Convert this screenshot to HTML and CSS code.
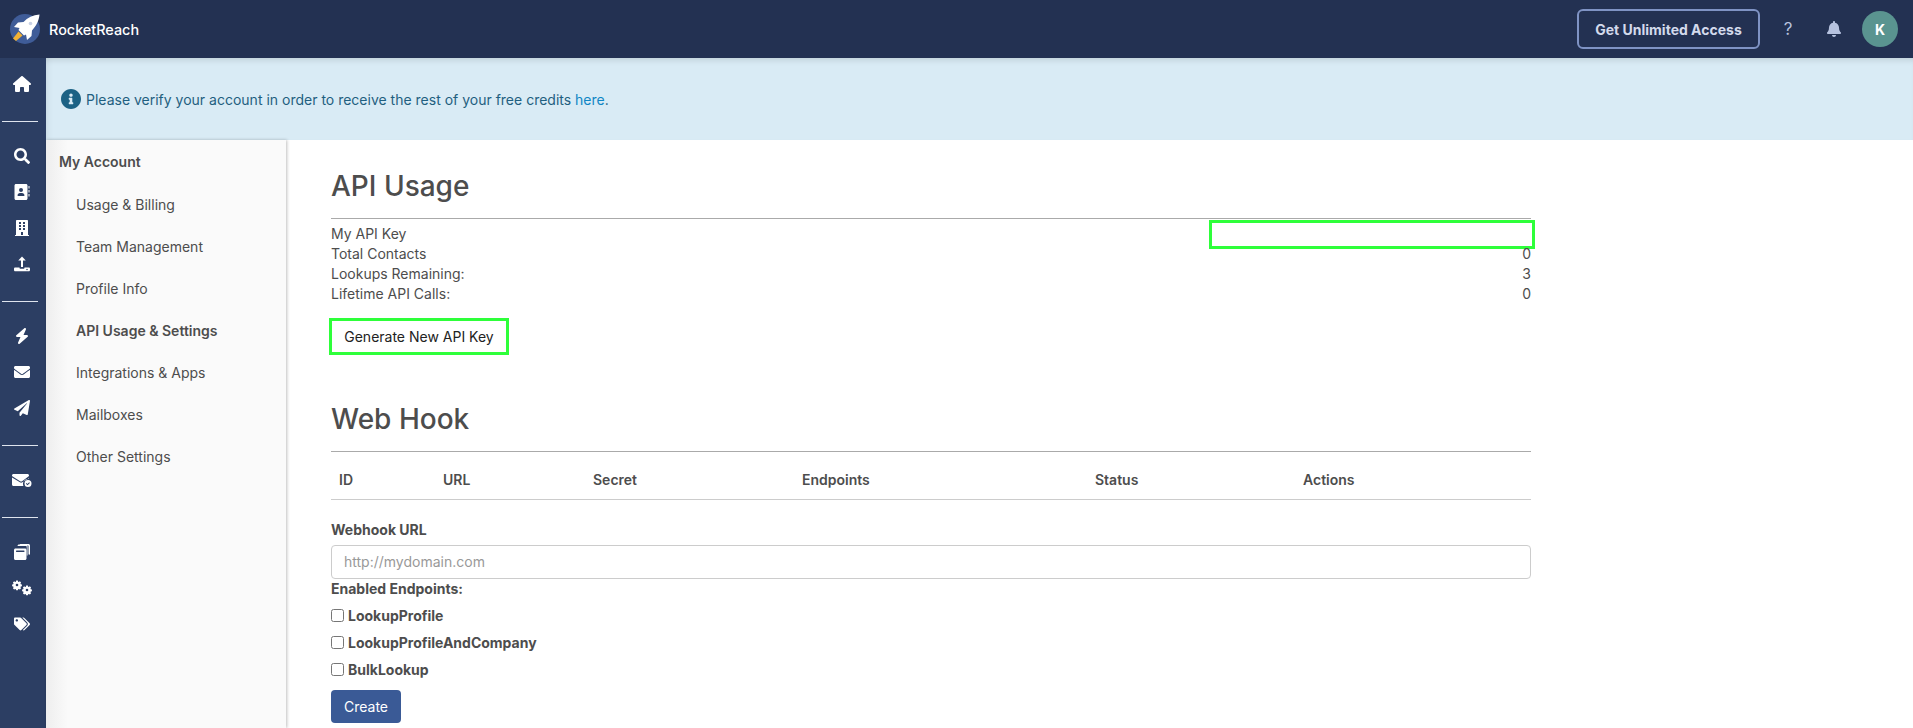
FILE: index.html
```html
<!DOCTYPE html>
<html lang="en">
<head>
<meta charset="UTF-8">
<title>RocketReach - API Usage &amp; Settings</title>
<link rel="stylesheet" href="styles.css">
</head>
<body>
<header class="topbar">
    <div class="brand">
        <svg class="brand-logo" viewBox="0 0 30 30">
            <circle cx="15" cy="15" r="15" fill="#3f5c98"/>
            <path d="M29.500.5C23 1 17.500 3.500 13.500 8L8 8.500 4 13l5.500 1-1 2 5.500 5.500 2-1 1 5.500 4.500-4 .5-5.500C26 12 29 7 29.500.5z" fill="#fff"/>
            <circle cx="20.500" cy="9.500" r="1.800" fill="#c9d2e6"/>
            <path d="M3 24.500l5.500-7 4 4-6.500 5.500z" fill="#f2b134"/>
        </svg>
        <span class="brand-name">RocketReach</span>
    </div>
    <div class="top-actions">
        <button class="upgrade-btn">Get Unlimited Access</button>
        <span class="help-link">?</span>
        <svg class="bell" viewBox="0 0 448 512"><path d="M224 512c35.320 0 63.970-28.650 63.970-64H160.030c0 35.350 28.650 64 63.970 64zm215.390-149.710c-19.320-20.760-55.470-51.990-55.470-154.290 0-77.700-54.480-139.900-127.940-155.160V32c0-17.670-14.320-32-31.980-32s-31.980 14.330-31.980 32v20.840C118.560 68.100 64.080 130.300 64.080 208c0 102.300-36.150 133.530-55.470 154.290-6 6.450-8.660 14.160-8.610 21.710.11 16.400 12.980 32 32.100 32h383.800c19.120 0 32-15.600 32.100-32 .05-7.550-2.610-15.270-8.610-21.710z"/></svg>
        <span class="avatar">K</span>
    </div>
</header>

<div class="page">
    <nav class="rail">
        <div class="rail-group first">
            <span class="rail-item"><svg class="home" viewBox="0 0 576 512"><path d="M575.800 255.500c0 18-15 32.100-32 32.100h-32l.7 160.200c0 2.700-.2 5.400-.5 8.100V472c0 22.100-17.900 40-40 40H456c-1.100 0-2.200 0-3.300-.1c-1.400 .1-2.800 .1-4.200 .1H416 392c-22.100 0-40-17.900-40-40V448 384c0-17.700-14.300-32-32-32H256c-17.700 0-32 14.300-32 32v64 24c0 22.100-17.900 40-40 40H160 128.100c-1.500 0-3-.1-4.500-.2c-1.200 .1-2.400 .2-3.600 .2H104c-22.100 0-40-17.900-40-40V360c0-.9 0-1.900 .1-2.800V287.600H32c-18 0-32-14-32-32.100c0-9 3-17 10-24L266.400 8c7-7 15-8 22-8s15 2 21 7L564.800 231.500c8 7 12 15 11 24z"/></svg></span>
        </div>
        <div class="rail-group">
            <span class="rail-item"><svg viewBox="0 0 512 512"><path d="M505 442.700L405.300 343c-4.500-4.500-10.600-7-17-7H372c27.600-35.300 44-79.700 44-128C416 93.100 322.900 0 208 0S0 93.100 0 208s93.100 208 208 208c48.300 0 92.700-16.400 128-44v16.300c0 6.400 2.500 12.500 7 17l99.700 99.700c9.400 9.400 24.600 9.400 33.900 0l28.300-28.300c9.400-9.400 9.400-24.600.1-34zM208 336c-70.700 0-128-57.200-128-128 0-70.700 57.200-128 128-128 70.700 0 128 57.200 128 128 0 70.700-57.200 128-128 128z"/></svg></span>
            <span class="rail-item"><svg viewBox="0 0 512 512"><path fill-rule="evenodd" d="M64 0h320c26.500 0 48 21.500 48 48v416c0 26.500-21.500 48-48 48H64c-26.500 0-48-21.500-48-48V48C16 21.500 37.500 0 64 0zm160 256a64 64 0 1 0 0-128 64 64 0 0 0 0 128zm-96 128h192c9 0 16-7 16-16 0-44-36-80-80-80h-64c-44 0-80 36-80 80 0 9 7 16 16 16z"/><path d="M464 64h32v80h-32zM464 192h32v80h-32zM464 320h32v80h-32z"/></svg></span>
            <span class="rail-item"><svg viewBox="0 0 448 512"><path d="M436 480h-20V24c0-13.255-10.745-24-24-24H56C42.745 0 32 10.745 32 24v456H12c-6.627 0-12 5.373-12 12v20h448v-20c0-6.627-5.373-12-12-12zM128 76c0-6.627 5.373-12 12-12h40c6.627 0 12 5.373 12 12v40c0 6.627-5.373 12-12 12h-40c-6.627 0-12-5.373-12-12V76zm0 96c0-6.627 5.373-12 12-12h40c6.627 0 12 5.373 12 12v40c0 6.627-5.373 12-12 12h-40c-6.627 0-12-5.373-12-12v-40zm52 148h-40c-6.627 0-12-5.373-12-12v-40c0-6.627 5.373-12 12-12h40c6.627 0 12 5.373 12 12v40c0 6.627-5.373 12-12 12zm76 160h-64v-84c0-6.627 5.373-12 12-12h40c6.627 0 12 5.373 12 12v84zm64-172c0 6.627-5.373 12-12 12h-40c-6.627 0-12-5.373-12-12v-40c0-6.627 5.373-12 12-12h40c6.627 0 12 5.373 12 12v40zm0-96c0 6.627-5.373 12-12 12h-40c-6.627 0-12-5.373-12-12v-40c0-6.627 5.373-12 12-12h40c6.627 0 12 5.373 12 12v40zm0-96c0 6.627-5.373 12-12 12h-40c-6.627 0-12-5.373-12-12V76c0-6.627 5.373-12 12-12h40c6.627 0 12 5.373 12 12v40z"/></svg></span>
            <span class="rail-item"><svg viewBox="0 0 512 512"><path d="M224 352V144h-88L256 16l120 128h-88v208z"/><path fill-rule="evenodd" d="M40 368h136v16c0 13 11 24 24 24h112c13 0 24-11 24-24v-16h136c22 0 40 18 40 40v40c0 22-18 40-40 40H40c-22 0-40-18-40-40v-40c0-22 18-40 40-40zm376 88a24 24 0 1 0 0-48 24 24 0 0 0 0 48z"/></svg></span>
        </div>
        <div class="rail-group">
            <span class="rail-item"><svg viewBox="0 0 448 512"><path d="M349.400 44.600c5.900-13.700 1.500-29.700-10.600-38.500s-28.600-8-39.900 1.800l-256 224c-10 8.800-13.600 22.900-8.900 35.300S50.700 288 64 288H175.500L98.600 467.400c-5.900 13.700-1.500 29.700 10.600 38.500s28.600 8 39.900-1.800l256-224c10-8.800 13.600-22.900 8.900-35.300s-16.600-20.700-30-20.700H272.500L349.400 44.600z"/></svg></span>
            <span class="rail-item"><svg viewBox="0 0 512 512"><path d="M502.300 190.800c3.900-3.100 9.700-.2 9.700 4.700V400c0 26.500-21.500 48-48 48H48c-26.500 0-48-21.500-48-48V195.600c0-5 5.700-7.800 9.700-4.700 22.400 17.400 52.100 39.500 154.100 113.600 21.100 15.400 56.700 47.800 92.200 47.600 35.700.3 72-32.800 92.300-47.600 102-74.100 131.600-96.300 154-113.700zM256 320c23.200.4 56.600-29.200 73.400-41.400 132.700-96.300 142.800-104.700 173.400-128.700 5.800-4.500 9.200-11.500 9.200-18.900v-19c0-26.500-21.500-48-48-48H48C21.500 64 0 85.500 0 112v19c0 7.400 3.400 14.300 9.200 18.900 30.600 23.900 40.700 32.400 173.400 128.700 16.800 12.200 50.200 41.800 73.400 41.400z"/></svg></span>
            <span class="rail-item"><svg viewBox="0 0 512 512"><path d="M476 3.200L12.500 270.600c-18.100 10.400-15.800 35.600 2.200 43.200L121 358.400l287.300-253.200c5.500-4.900 13.300 2.600 8.600 8.300L176 407v80.500c0 23.600 28.500 32.900 42.500 15.800L282 426l124.600 52.200c14.200 6 30.400-2.900 33-18.200l72-432C515 7.800 493.300-6.800 476 3.200z"/></svg></span>
        </div>
        <div class="rail-group">
            <span class="rail-item"><svg class="wide" viewBox="0 0 640 512"><path d="M48 64h448c26.500 0 48 21.500 48 48v8c0 7-3 13-9 18L312 300c-12 9-28 9-40 0L9 138c-6-5-9-11-9-18v-8c0-26.500 21.500-48 48-48z"/><path d="M0 178l254 152c23 14 53 14 76 0l214-130v24c-10-2-20-4-32-4-88 0-160 72-160 160 0 22 4 44 13 64H48c-26.500 0-48-21.500-48-48z"/><path fill-rule="evenodd" d="M512 256a112 112 0 1 1 0 224 112 112 0 0 1 0-224zm-16 168l76-76-22-22-54 54-30-30-22 22z"/></svg></span>
        </div>
        <div class="rail-group">
            <span class="rail-item"><svg viewBox="0 0 512 512"><path fill-rule="evenodd" d="M48 144h304c26.500 0 48 21.500 48 48v272c0 26.500-21.500 48-48 48H48c-26.500 0-48-21.500-48-48V192c0-26.500 21.500-48 48-48zm32 64c-9 0-16 7-16 16v16c0 9 7 16 16 16h240c9 0 16-7 16-16v-16c0-9-7-16-16-16z"/><path d="M112 72c0-26.500 21.500-48 48-48h224c26.500 0 48 21.500 48 48v300h-24V96c0-13-11-24-24-24H112z" transform="translate(0 -6)"/><path d="M208 0h256c26.500 0 48 21.500 48 48v272c0 15-10 24-24 24s-24-9-24-24V64c0-9-7-16-16-16H208c-14 0-24-10-24-24s10-24 24-24z"/></svg></span>
            <span class="rail-item"><svg class="wide" viewBox="0 0 640 512"><path fill-rule="evenodd" d="M132 16h56l8 36 24 10 31-20 40 40-20 31 10 24 36 8v56l-36 8-10 24 20 31-40 40-31-20-24 10-8 36h-56l-8-36-24-10-31 20-40-40 20-31-10-24-36-8v-56l36-8 10-24-20-31 40-40 31 20 24-10zm28 102a42 42 0 1 0 0 84 42 42 0 0 0 0-84z"/><path fill-rule="evenodd" d="M452 176h56l8 36 24 10 31-20 40 40-20 31 10 24 36 8v56l-36 8-10 24 20 31-40 40-31-20-24 10-8 36h-56l-8-36-24-10-31 20-40-40 20-31-10-24-36-8v-56l36-8 10-24-20-31 40-40 31 20 24-10zm28 102a42 42 0 1 0 0 84 42 42 0 0 0 0-84z"/></svg></span>
            <span class="rail-item"><svg viewBox="0 0 640 512"><path d="M497.941 225.941L286.059 14.059A48 48 0 0 0 252.118 0H48C21.490 0 0 21.490 0 48v204.118a48 48 0 0 0 14.059 33.941l211.882 211.882c18.744 18.745 49.136 18.746 67.882 0l204.118-204.118c18.745-18.745 18.745-49.137 0-67.882zM112 160c-26.510 0-48-21.490-48-48s21.490-48 48-48 48 21.490 48 48-21.490 48-48 48zm513.941 133.823L421.823 497.941c-18.745 18.745-49.137 18.745-67.882 0l-.36-.36L527.640 323.522c16.999-16.999 26.360-39.600 26.360-63.640s-9.362-46.641-26.360-63.640L331.397 0h48.721a48 48 0 0 1 33.941 14.059l211.882 211.882c18.745 18.745 18.745 49.137 0 67.882z"/></svg></span>
        </div>
    </nav>

    <div class="body-col">
        <div class="notice">
            <svg class="notice-icon" viewBox="8 8 496 496"><path d="M256 8C119 8 8 119.080 8 256c0 137 111 248 248 248s248-111 248-248C504 119.080 393 8 256 8zm0 110c23.200 0 42 18.800 42 42s-18.800 42-42 42-42-18.800-42-42 18.800-42 42-42zm56 254c0 6.600-5.400 12-12 12h-88c-6.600 0-12-5.400-12-12v-24c0-6.600 5.400-12 12-12h12v-64h-12c-6.600 0-12-5.400-12-12v-24c0-6.600 5.400-12 12-12h64c6.600 0 12 5.400 12 12v100h12c6.600 0 12 5.400 12 12v24z"/></svg>
            <span>Please verify your account in order to receive the rest of your free credits <a class="notice-link" href="#">here</a>.</span>
        </div>

        <div class="columns">
            <aside class="subnav">
                <div class="subnav-title">My Account</div>
                <a class="subnav-link" href="#">Usage &amp; Billing</a>
                <a class="subnav-link" href="#">Team Management</a>
                <a class="subnav-link" href="#">Profile Info</a>
                <a class="subnav-link active" href="#">API Usage &amp; Settings</a>
                <a class="subnav-link" href="#">Integrations &amp; Apps</a>
                <a class="subnav-link" href="#">Mailboxes</a>
                <a class="subnav-link" href="#">Other Settings</a>
            </aside>

            <main class="content">
                <h2 class="section-title">API Usage</h2>
                <div class="stats">
                    <div class="stat-row key-row"><span>My API Key</span><span class="key-mark"></span></div>
                    <div class="stat-row"><span>Total Contacts</span><span>0</span></div>
                    <div class="stat-row"><span>Lookups Remaining:</span><span>3</span></div>
                    <div class="stat-row"><span>Lifetime API Calls:</span><span>0</span></div>
                </div>
                <button class="generate-btn">Generate New API Key</button>

                <h2 class="section-title webhook-title">Web Hook</h2>
                <table class="hook-table">
                    <thead>
                        <tr>
                            <th class="col-id">ID</th>
                            <th class="col-url">URL</th>
                            <th class="col-secret">Secret</th>
                            <th class="col-endpoints">Endpoints</th>
                            <th class="col-status">Status</th>
                            <th>Actions</th>
                        </tr>
                    </thead>
                </table>

                <form class="hook-form">
                    <label class="field-label" for="hook-url">Webhook URL</label>
                    <input class="field-input" id="hook-url" type="text" placeholder="http://mydomain.com">
                    <div class="field-label endpoints-label">Enabled Endpoints:</div>
                    <label class="check-row"><input type="checkbox"> LookupProfile</label>
                    <label class="check-row"><input type="checkbox"> LookupProfileAndCompany</label>
                    <label class="check-row"><input type="checkbox"> BulkLookup</label>
                    <button class="create-btn" type="button">Create</button>
                </form>
            </main>
        </div>
    </div>
</div>
</body>
</html>
```

FILE: styles.css
```css
* {
    box-sizing: border-box;
}
html, body {
    height: 100%;
}
body {
    margin: 0;
    display: flex;
    flex-direction: column;
    overflow: hidden;
    font-family: Inter, "Noto Sans", sans-serif;
    font-size: 14px;
    color: #4d4d4d;
    background-color: #fff;
}

/* top bar */
.topbar {
    flex: none;
    height: 58px;
    padding: 0 15px 0 10px;
    display: flex;
    align-items: center;
    justify-content: space-between;
    background-color: #233152;
}
.brand {
    display: flex;
    align-items: center;
    gap: 9px;
}
.brand-logo {
    width: 30px;
    height: 30px;
}
.brand-name {
    font-size: 14.4px;
    font-weight: 500;
    color: #fff;
}
.top-actions {
    display: flex;
    align-items: center;
}
.upgrade-btn {
    width: 183px;
    height: 40px;
    border: 2px solid #7f93c4;
    border-radius: 6px;
    background: none;
    color: #d3daec;
    font-family: inherit;
    font-size: 14px;
    font-weight: 700;
}
.help-link {
    width: 16px;
    margin-left: 20px;
    text-align: center;
    font-size: 17px;
    color: #b6c2df;
}
.bell {
    width: 14px;
    height: 16px;
    margin-left: 31px;
    fill: #b6c2df;
}
.avatar {
    width: 36px;
    height: 36px;
    margin-left: 21px;
    border-radius: 50%;
    display: flex;
    align-items: center;
    justify-content: center;
    background-color: #5a9490;
    color: #fff;
    font-size: 14px;
    font-weight: 700;
}

/* left icon rail */
.page {
    flex: 1;
    min-height: 0;
    display: flex;
}
.rail {
    flex: none;
    width: 46px;
    background-color: #2c3e63;
}
.rail-group {
    position: relative;
    padding: 16px 0 20px;
}
.rail-group.first {
    padding-top: 8px;
}
.rail-group:not(:last-child)::after {
    content: "";
    position: absolute;
    left: 2px;
    bottom: 0;
    width: 36px;
    height: 1px;
    background-color: #dfe4ee;
}
.rail-item {
    height: 36px;
    padding-right: 2px;
    display: flex;
    align-items: center;
    justify-content: center;
}
.rail-item svg {
    width: 16px;
    height: 16px;
    fill: #fff;
}
.rail-item svg.home {
    width: 18px;
    height: 16px;
}
.rail-item svg.wide {
    width: 20px;
    height: 16px;
}

/* notice */
.body-col {
    flex: 1;
    min-width: 0;
    display: flex;
    flex-direction: column;
}
.notice {
    flex: none;
    height: 82px;
    padding: 0 0 0 15px;
    display: flex;
    align-items: center;
    gap: 5px;
    background-color: #d9ebf5;
    box-shadow: inset 0 6px 6px -4px rgba(0, 0, 0, 0.12), inset 6px 0 6px -4px rgba(0, 0, 0, 0.06);
    color: #1f5f80;
    font-size: 14px;
}
.notice-icon {
    width: 20px;
    height: 20px;
    fill: #1c6285;
}
.notice-link {
    color: #0f86c5;
    text-decoration: none;
}

/* second level nav */
.columns {
    flex: 1;
    min-height: 0;
    display: flex;
}
.subnav {
    flex: none;
    width: 240px;
    padding: 11px 0 0 13px;
    background: linear-gradient(to right, #eeeeee, #fafafa 22px);
    box-shadow: 1px 0 3px rgba(0, 0, 0, 0.25);
}
.subnav-title {
    height: 22px;
    line-height: 22px;
    margin-bottom: 11px;
    font-weight: 600;
}
.subnav-link {
    display: block;
    height: 42px;
    line-height: 42px;
    padding-left: 17px;
    color: #4d4d4d;
    text-decoration: none;
}
.subnav-link.active {
    font-weight: 600;
}

/* main column */
.content {
    width: 1245px;
    padding: 28px 0 0 45px;
}
.section-title {
    margin: 0;
    height: 51px;
    line-height: 36px;
    border-bottom: 1px solid #aaa;
    font-size: 28px;
    font-weight: 500;
}
.stats {
    margin-top: 5px;
}
.stat-row {
    position: relative;
    height: 20px;
    line-height: 20px;
    display: flex;
    justify-content: space-between;
}
.key-mark {
    position: absolute;
    right: -4px;
    top: -4px;
    width: 326px;
    height: 29px;
    border: 3px solid #2eff3a;
}
.generate-btn {
    display: block;
    width: 176px;
    height: 33px;
    margin: 16px 0 0 0;
    padding: 0;
    border: 1px solid #222;
    border-radius: 0;
    outline: 3px solid #2eff3a;
    outline-offset: -1px;
    background-color: #fff;
    color: #222;
    font-family: inherit;
    font-size: 14px;
}
.webhook-title {
    margin-top: 48px;
}
.hook-table {
    width: 1200px;
    border-collapse: collapse;
    table-layout: fixed;
}
.hook-table th {
    height: 47px;
    padding: 8px 8px 11px;
    text-align: left;
    vertical-align: bottom;
    font-weight: 600;
    border-bottom: 1px solid #ccc;
}
.col-id { width: 104px; }
.col-url { width: 150px; }
.col-secret { width: 209px; }
.col-endpoints { width: 293px; }
.col-status { width: 208px; }

.hook-form {
    width: 1200px;
    padding-top: 19px;
}
.field-label {
    display: block;
    height: 22px;
    line-height: 22px;
    font-weight: 650;
}
.field-input {
    display: block;
    width: 100%;
    height: 34px;
    margin-top: 4px;
    padding: 0 12px;
    border: 1px solid #ccc;
    border-radius: 4px;
    font-family: inherit;
    font-size: 14px;
}
.field-input::placeholder {
    color: #999;
}
.endpoints-label {
    margin: -1px 0 2px;
}
.check-row {
    display: flex;
    align-items: center;
    gap: 4px;
    height: 27px;
    font-weight: 650;
}
.check-row input {
    width: 13px;
    height: 13px;
    margin: 0;
}
.create-btn {
    display: block;
    width: 70px;
    height: 33px;
    margin-top: 7px;
    border: none;
    border-radius: 4px;
    background-color: #3a5a96;
    color: #fff;
    font-family: inherit;
    font-size: 14px;
}
```
